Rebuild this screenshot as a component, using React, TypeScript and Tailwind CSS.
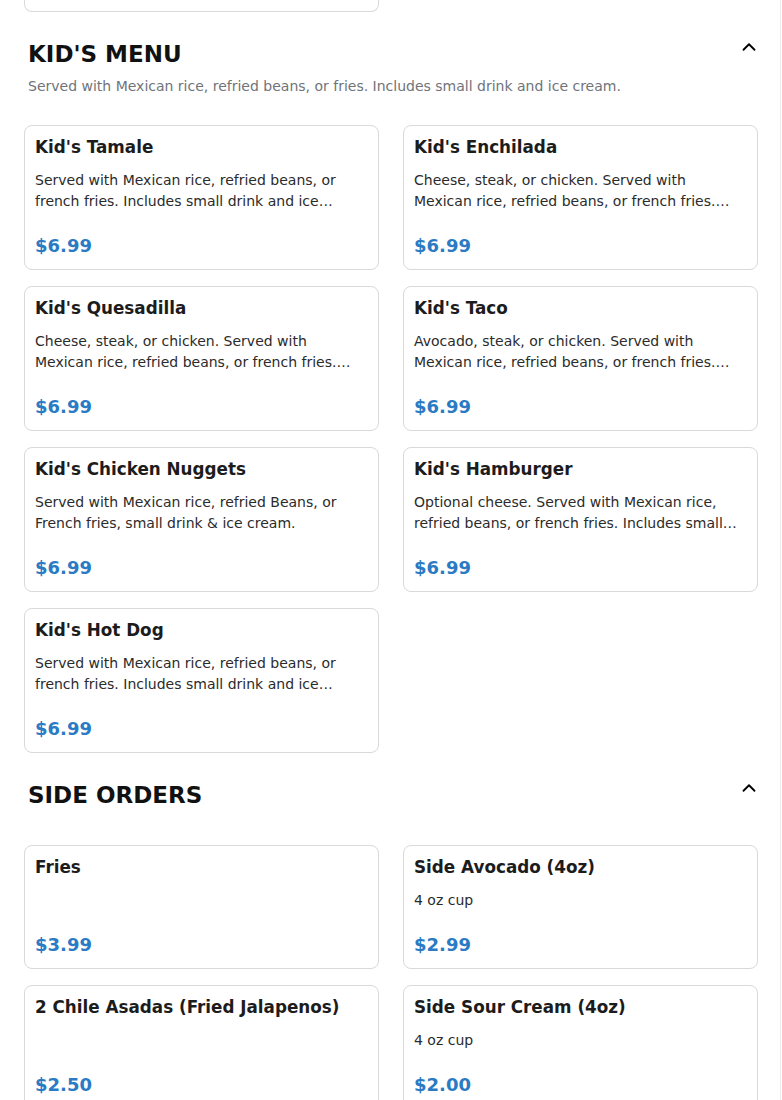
import React from "react";
import { ChevronUp } from "lucide-react";

type Item = { name: string; desc?: string; price: string };

const kids: Item[] = [
  { name: "Kid's Tamale", desc: "Served with Mexican rice, refried beans, or french fries. Includes small drink and ice cream.", price: "$6.99" },
  { name: "Kid's Enchilada", desc: "Cheese, steak, or chicken. Served with Mexican rice, refried beans, or french fries. Includes small drink and ice cream.", price: "$6.99" },
  { name: "Kid's Quesadilla", desc: "Cheese, steak, or chicken. Served with Mexican rice, refried beans, or french fries. Includes small drink and ice cream.", price: "$6.99" },
  { name: "Kid's Taco", desc: "Avocado, steak, or chicken. Served with Mexican rice, refried beans, or french fries. Includes small drink and ice cream.", price: "$6.99" },
  { name: "Kid's Chicken Nuggets", desc: "Served with Mexican rice, refried Beans, or French fries, small drink & ice cream.", price: "$6.99" },
  { name: "Kid's Hamburger", desc: "Optional cheese. Served with Mexican rice, refried beans, or french fries. Includes small drink and ice cream.", price: "$6.99" },
  { name: "Kid's Hot Dog", desc: "Served with Mexican rice, refried beans, or french fries. Includes small drink and ice cream.", price: "$6.99" },
];

const sides: Item[] = [
  { name: "Fries", price: "$3.99" },
  { name: "Side Avocado (4oz)", desc: "4 oz cup", price: "$2.99" },
  { name: "2 Chile Asadas (Fried Jalapenos)", price: "$2.50" },
  { name: "Side Sour Cream (4oz)", desc: "4 oz cup", price: "$2.00" },
];

function Card({ item }: { item: Item }) {
  return (
    <div className="flex flex-col rounded-lg border border-[#d9d9d9] bg-white p-2.5">
      <div className="text-[16.8px] font-bold leading-[22px] text-[#1c1c1c]">{item.name}</div>
      {item.desc && (
        <p className="mt-3 mb-5 line-clamp-2 text-[14px] leading-[21px] text-[#2b2b2b]">{item.desc}</p>
      )}
      <div className="mt-auto text-[18px] font-bold leading-[27px] text-[#2a7bc4]">{item.price}</div>
    </div>
  );
}

function Header({ title }: { title: string }) {
  return (
    <div className="flex items-start justify-between pl-1 -mr-0.5">
      <h2 className="text-[23px] font-bold leading-8 tracking-normal text-[#111111]">{title}</h2>
      <ChevronUp size={22} strokeWidth={2} className="-mt-0.5 text-black" />
    </div>
  );
}

export default function App() {
  return (
    <div
      className="min-h-[1100px] w-[781px] border-r border-[#ececec] bg-white"
      style={{ fontFamily: '"DejaVu Sans", sans-serif' }}
    >
      <div className="pl-6 pr-[22px]">
        <div className="grid grid-cols-2 gap-x-6">
          <div className="h-[12px] rounded-b-lg border border-t-0 border-[#d9d9d9]" />
        </div>

        <section className="mt-[26px]">
          <Header title="KID'S MENU" />
          <p className="mt-[6px] pl-1 text-[14px] leading-5 text-[#6f747a]">
            Served with Mexican rice, refried beans, or fries. Includes small drink and ice cream.
          </p>
          <div className="mt-[29px] grid grid-cols-2 gap-x-6 gap-y-4">
            {kids.map((it) => (
              <Card key={it.name} item={it} />
            ))}
          </div>
        </section>

        <section className="mt-[26px]">
          <Header title="SIDE ORDERS" />
          <div className="mt-[34px] grid grid-cols-2 gap-x-6 gap-y-4 pb-6">
            {sides.map((it) => (
              <Card key={it.name} item={it} />
            ))}
          </div>
        </section>
      </div>
    </div>
  );
}
